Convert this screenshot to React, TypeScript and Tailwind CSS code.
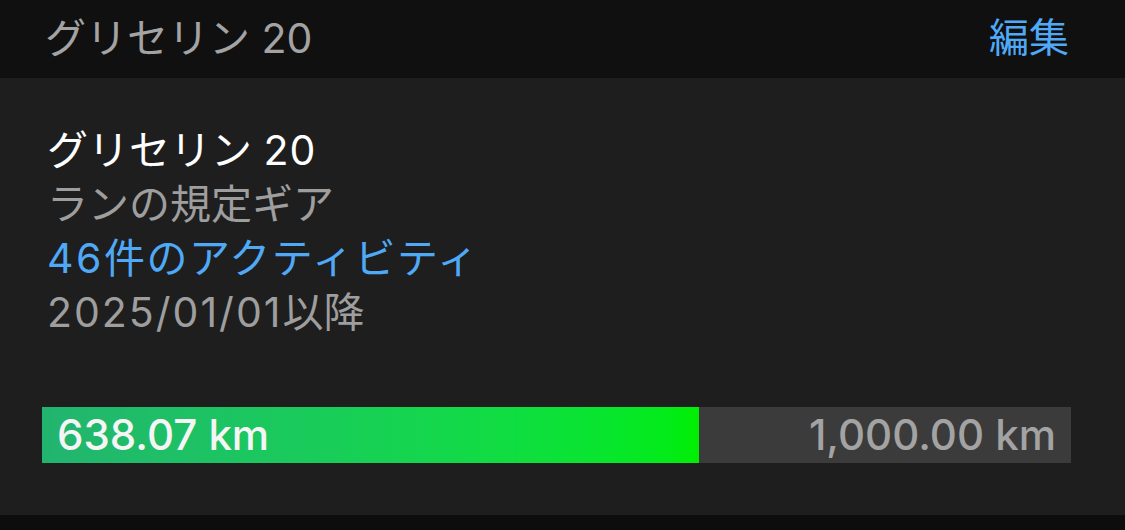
import React from "react";

const font = { fontFamily: '"Inter", "Noto Sans CJK JP", sans-serif' };

export default function App() {
  const used = 638.07;
  const total = 1000;
  const pct = (used / total) * 100;
  return (
    <div className="w-[1125px] h-[530px] bg-[#0d0d0d] flex flex-col overflow-hidden" style={font}>
      <div className="h-[78px] bg-[#101010] flex items-center justify-between pl-[45px] pr-[56px] pb-[2px] shrink-0">
        <span className="text-[41px] text-[#a3a3a3] leading-none">グリセリン 20</span>
        <span className="text-[40px] text-[#4fa9f6] leading-none">編集</span>
      </div>
      <div className="h-[437px] bg-[#1e1e1e] flex flex-col pl-[42px] pr-[54px] pt-[45px] shrink-0">
        <div className="flex flex-col pl-[5px] text-[41px] leading-[54px]">
          <span className="text-white">
            グリセリン <span className="tracking-[1px]">20</span>
          </span>
          <span className="text-[#9e9e9e]">ランの規定ギア</span>
          <span className="text-[#4fa9f6] tracking-[1.5px]">
            <span className="tracking-[2.5px]">46</span>件のアクティビティ
          </span>
          <span className="text-[#9e9e9e]">
            <span className="tracking-[2px]">2025/01/01</span>以降
          </span>
        </div>
        <div className="mt-[68px] relative h-[56px] bg-[#3b3b3b] flex items-center justify-between">
          <div
            className="absolute left-0 top-0 bottom-0 bg-gradient-to-r from-[#22b46f] to-[#00ee00]"
            style={{ width: `${pct}%` }}
          />
          <span className="relative pl-[15px] text-[42px] leading-none font-medium text-[#f5f5f5]">638.07 km</span>
          <span className="relative pr-[15px] text-[42px] leading-none font-medium text-[#a3a3a3]">1,000.00 km</span>
        </div>
      </div>
    </div>
  );
}
